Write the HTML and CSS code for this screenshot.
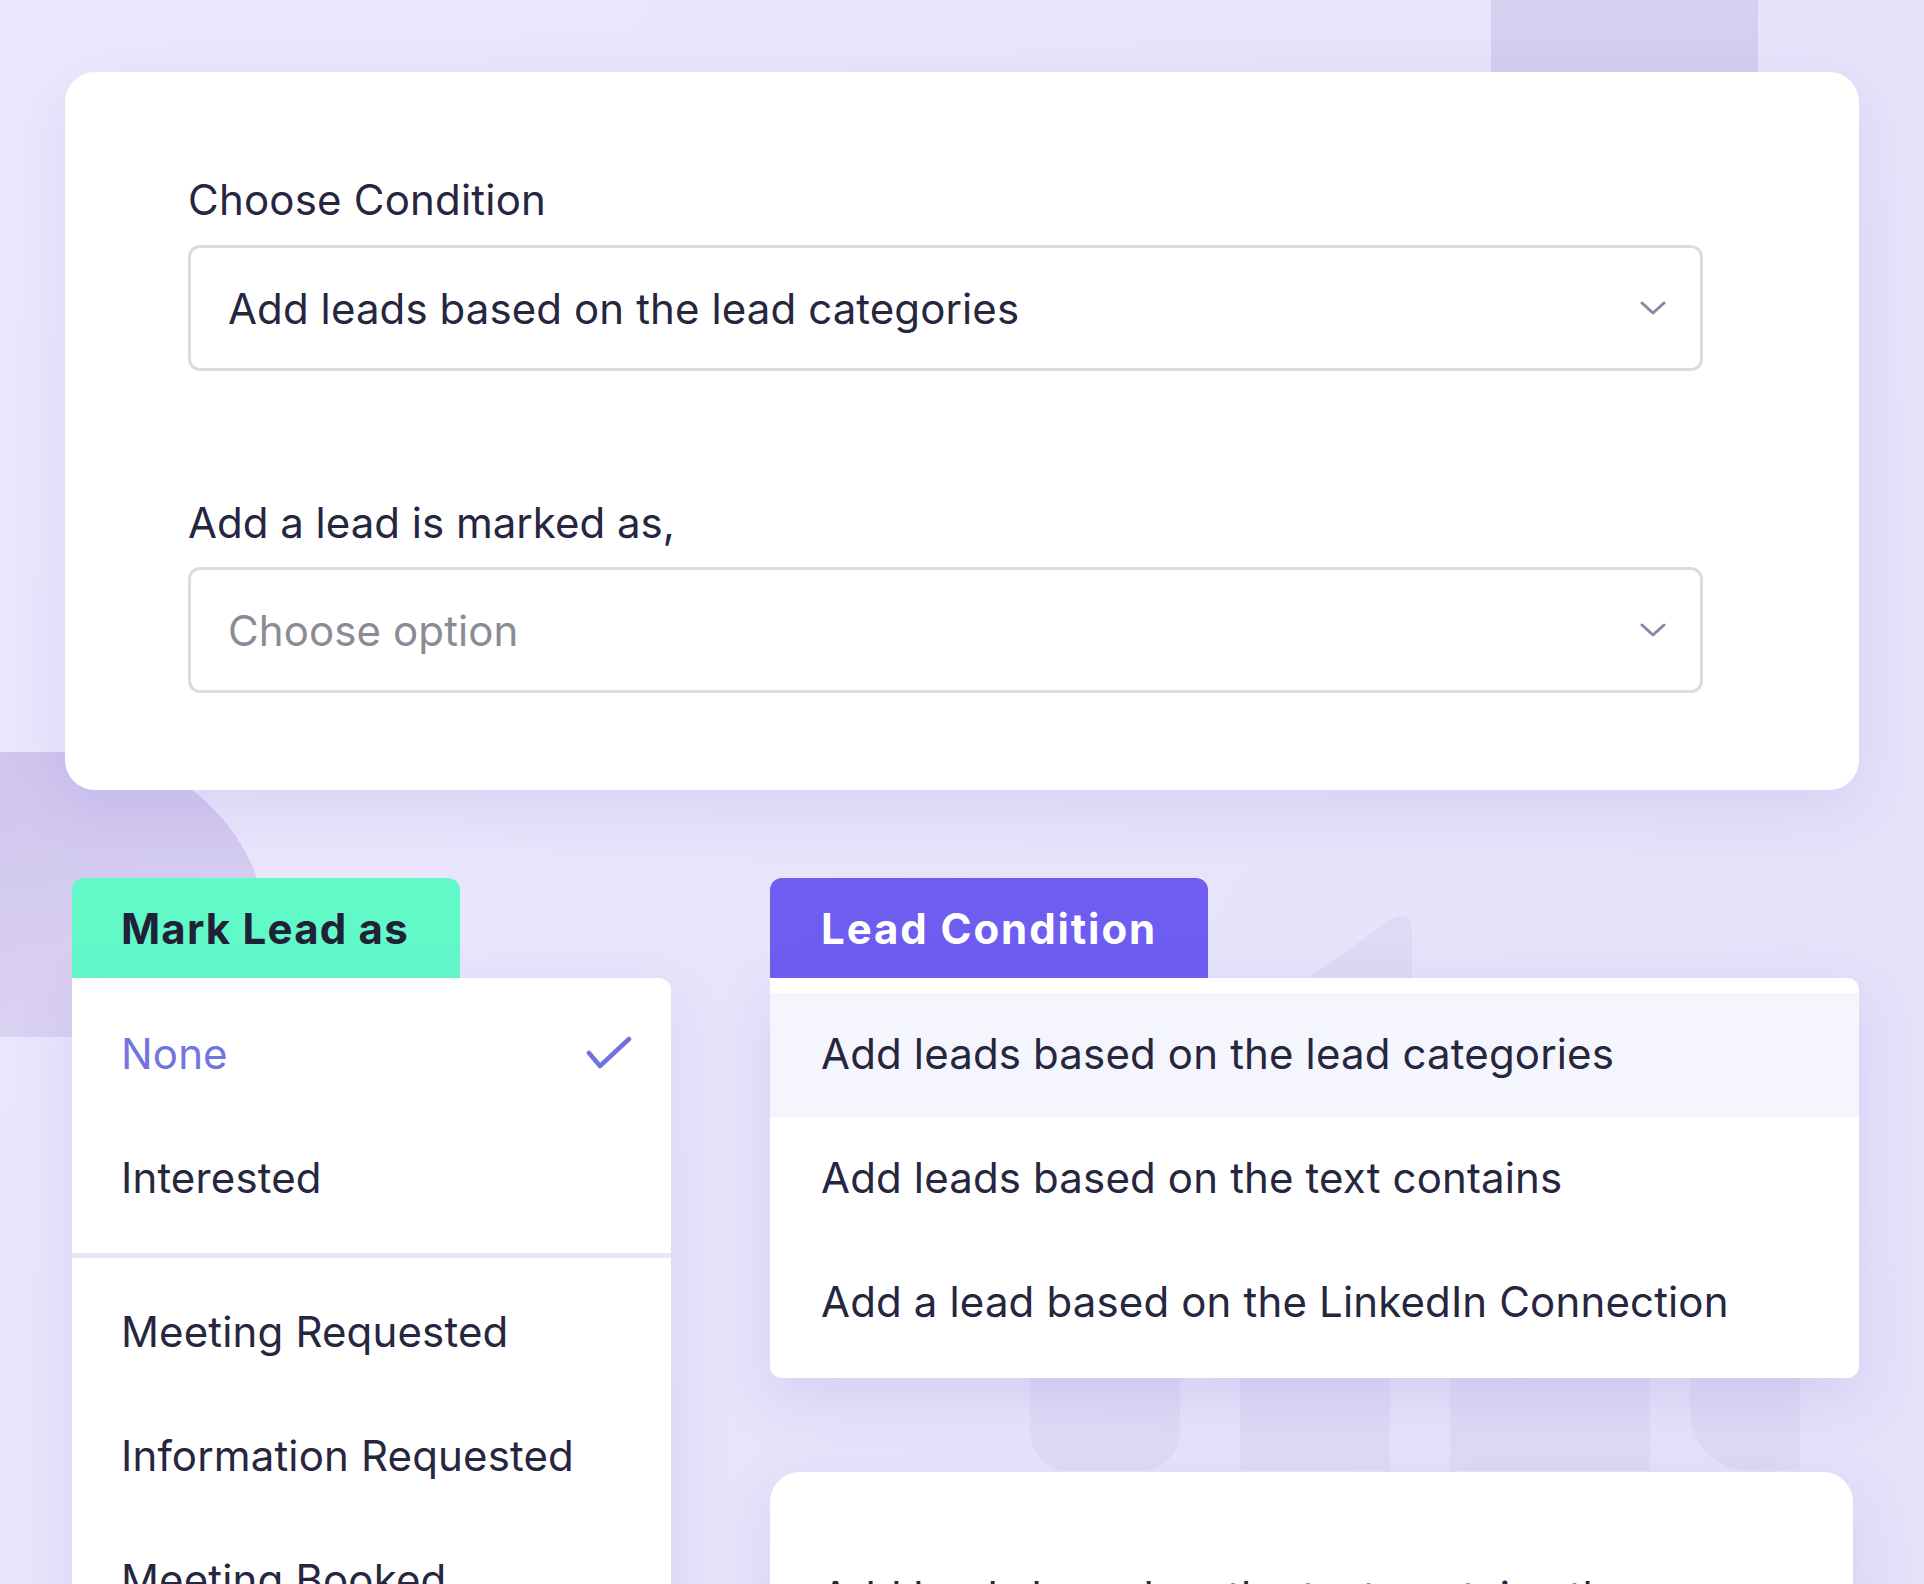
FILE: index.html
```html
<!DOCTYPE html>
<html lang="en">
<head>
<meta charset="utf-8">
<title>Lead conditions</title>
<link rel="stylesheet" href="styles.css">
</head>
<body>
<div class="page">
  <div class="deco deco-top"></div>
  <div class="deco deco-left"></div>
  <svg class="deco deco-tri" viewBox="0 0 200 120"><path d="M10 120 L150 20 Q170 8 172 30 L172 120 Z" fill="#dfd9f5"/></svg>
  <div class="deco deco-mark">
    <span class="wm wm-s"></span><span class="wm wm-p"></span><span class="wm wm-n"></span><span class="wm wm-c"></span>
  </div>

  <section class="condition-card">
    <div class="field-label">Choose Condition</div>
    <div class="select">
      <span class="select-value">Add leads based on the lead categories</span>
      <svg class="chevron" viewBox="0 0 26 16"><polyline points="2,3 13,13 24,3" fill="none" stroke="#8a86a6" stroke-width="3" stroke-linecap="round" stroke-linejoin="round"/></svg>
    </div>
    <div class="field-label second">Add a lead is marked as,</div>
    <div class="select">
      <span class="select-placeholder">Choose option</span>
      <svg class="chevron" viewBox="0 0 26 16"><polyline points="2,3 13,13 24,3" fill="none" stroke="#8a86a6" stroke-width="3" stroke-linecap="round" stroke-linejoin="round"/></svg>
    </div>
  </section>

  <div class="panels">
    <div class="panel panel-mark">
      <div class="tab tab-mint">Mark Lead as</div>
      <div class="mark-list">
        <div class="group group-first">
          <div class="row row-selected">
            <span>None</span>
            <svg class="check" viewBox="0 0 46 34"><polyline points="3,17 14,30 43,3" fill="none" stroke="#7072e0" stroke-width="4.5" stroke-linecap="round" stroke-linejoin="round"/></svg>
          </div>
          <div class="row">Interested</div>
        </div>
        <div class="group group-second">
          <div class="row">Meeting Requested</div>
          <div class="row">Information Requested</div>
          <div class="row">Meeting Booked</div>
        </div>
      </div>
    </div>

    <div class="panel panel-cond">
      <div class="tab tab-purple">Lead Condition</div>
      <div class="cond-list">
        <div class="row row-hover">Add leads based on the lead categories</div>
        <div class="row">Add leads based on the text contains</div>
        <div class="row">Add a lead based on the LinkedIn Connection</div>
      </div>
      <div class="next-card">
        <div class="next-text">Add leads based on the text contains the keyword</div>
      </div>
    </div>
  </div>
</div>
</body>
</html>
```

FILE: styles.css
```css
* { box-sizing: border-box; }

html, body {
  margin: 0;
  padding: 0;
}

body {
  font-family: Inter, "Noto Sans", sans-serif;
  color: #25253f;
  background: #e8e4fb;
}

.page {
  position: relative;
  width: 1924px;
  height: 1584px;
  overflow: hidden;
  padding: 72px 0 0 65px;
  background: linear-gradient(120deg, #ebe8fd 0%, #e8e4fb 45%, #e5e1f9 100%);
}

/* decorative background shapes (behind content) */
.deco {
  position: absolute;
  z-index: 0;
  pointer-events: none;
}

.deco-top {
  left: 1491px;
  top: 0;
  width: 267px;
  height: 120px;
  background: linear-gradient(180deg, #d8d0f1, #d3cbef);
}

.deco-left {
  left: -40px;
  top: 752px;
  width: 308px;
  height: 285px;
  border-radius: 0 190px 0 0;
  background: linear-gradient(170deg, #cfc5ee 0%, #d6cdf1 60%, #dcd4f4 100%);
}

.deco-tri {
  left: 1240px;
  top: 900px;
  width: 200px;
  height: 120px;
}

.deco-mark {
  left: 1030px;
  top: 1378px;
  width: 780px;
  height: 93px;
  opacity: 0.4;
}

.wm {
  position: absolute;
  top: 0;
  height: 93px;
  background: #d6cef1;
}
.wm-s { left: 0; width: 150px; border-radius: 0 0 40px 40px; }
.wm-p { left: 210px; width: 150px; }
.wm-n { left: 420px; width: 200px; }
.wm-c { left: 660px; width: 110px; border-radius: 0 0 0 60px; }

/* main card */
.condition-card {
  position: relative;
  z-index: 1;
  width: 1794px;
  padding: 103px 156px 97px 123px;
  background: #ffffff;
  border-radius: 30px;
  box-shadow: 0 20px 60px rgba(120, 100, 210, 0.14);
}

.field-label {
  font-size: 42px;
  line-height: 50px;
  color: #26263f;
  margin-bottom: 20px;
  letter-spacing: 0.2px;
}

.field-label.second {
  margin-top: 127px;
  margin-bottom: 19px;
  letter-spacing: 0;
}

.select {
  display: flex;
  align-items: center;
  justify-content: space-between;
  height: 126px;
  padding: 0 34px 0 37px;
  border: 3px solid #dcdce0;
  border-radius: 12px;
  background: #ffffff;
  font-size: 42px;
  letter-spacing: 0.1px;
}

.select-value { color: #26263f; }
.select-placeholder { color: #8b8b96; }

.chevron {
  width: 26px;
  height: 16px;
  flex: none;
}

/* bottom panels */
.panels {
  position: relative;
  z-index: 1;
  display: flex;
  gap: 99px;
  margin-top: 88px;
  margin-left: 7px;
}

.panel {
  display: flex;
  flex-direction: column;
  align-items: flex-start;
}

.panel-mark { width: 599px; }
.panel-cond { width: 1089px; }

.tab {
  height: 100px;
  line-height: 102px;
  padding: 0 51px;
  border-radius: 12px 12px 0 0;
  font-size: 42px;
  font-weight: 700;
  letter-spacing: 1.9px;
}

.tab-mint {
  padding: 0 51px 0 49px;
  letter-spacing: 1.2px;
  background: #62f9c9;
  color: #1f2236;
}

.tab-purple {
  background: #6f5cf1;
  color: #ffffff;
}

.row {
  display: flex;
  align-items: center;
  justify-content: space-between;
  height: 124px;
  padding-bottom: 4px;
  font-size: 42px;
  color: #26263f;
  letter-spacing: 0.15px;
}

.mark-list {
  width: 100%;
  height: 700px;
  background: #ffffff;
  border-radius: 0 12px 0 0;
  box-shadow: 0 20px 60px rgba(120, 100, 210, 0.14);
}

.mark-list .row {
  padding-left: 49px;
  padding-right: 39px;
}

.group-first {
  padding-top: 15px;
  padding-bottom: 12px;
}

.group-second {
  border-top: 5px solid #e8e6f5;
  padding-top: 13px;
}

.row-selected {
  color: #7274df;
}

.check {
  width: 46px;
  height: 34px;
  flex: none;
}

.cond-list {
  width: 100%;
  padding: 15px 0 13px;
  background: #ffffff;
  border-radius: 0 12px 12px 12px;
  box-shadow: 0 20px 60px rgba(120, 100, 210, 0.16);
}

.cond-list .row {
  padding-left: 51px;
  padding-right: 51px;
}

.row-hover {
  background: #f5f6fd;
}

.next-card {
  width: 1083px;
  height: 300px;
  margin-top: 94px;
  padding: 100px 51px 0;
  background: #ffffff;
  border-radius: 30px;
  box-shadow: 0 20px 60px rgba(120, 100, 210, 0.14);
}

.next-text {
  font-size: 42px;
  line-height: 50px;
  color: #26263f;
}
```
